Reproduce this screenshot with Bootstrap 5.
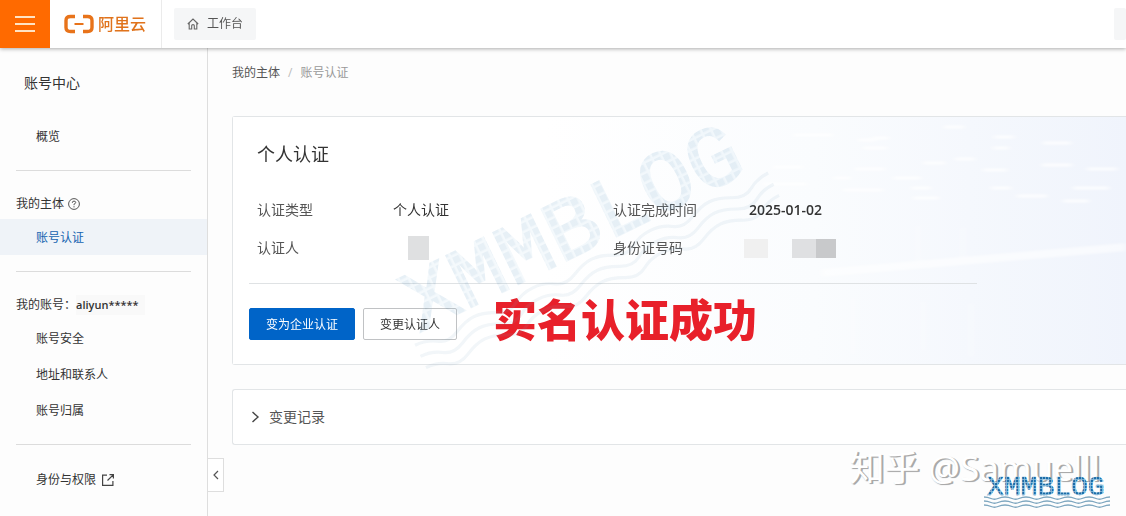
<!DOCTYPE html>
<html lang="zh-CN">
<head>
<meta charset="utf-8">
<meta name="viewport" content="width=device-width, initial-scale=1">
<title>账号认证</title>
<link rel="stylesheet" href="https://cdn.jsdelivr.net/npm/bootstrap@5.3.0/dist/css/bootstrap.min.css">
<style>
  body { font-family: "Open Sans", "Noto Sans CJK SC", sans-serif; font-size: 12px; line-height: 20px; color: #333; background: #fdfdfd; overflow-x: hidden; }
  a { color: inherit; text-decoration: none; }
  .topbar { height: 48px; background: #fff; box-shadow: 0 1px 4px rgba(0,0,0,.32); z-index: 5; }
  .menu-btn { width: 50px; background: #ff6a00; border: 0; }
  .brand { width: 112px; padding-left: 14px; gap: 4px; color: #e0731c; font-size: 16px; font-weight: 500; border-right: 1px solid #ebebeb; }
  .top-chip { height: 32px; background: #f5f6f7; color: #555; border-radius: 2px; }
  .top-link { padding: 0 13px; gap: 8px; margin-left: 12px; }
  .top-more { width: 12px; border: 0; }
  .side { width: 208px; padding-top: 18px; border-right: 1px solid #dedede; }
  .side-title { height: 34px; padding-left: 24px; margin-bottom: 18px; font-size: 14px; }
  .side-group { height: 32px; padding: 2px 0 0 16px; gap: 4px; }
  .side-item { height: 36px; padding: 2px 0 0 36px; gap: 6px; }
  .side-item.current { background: #eff3f8; color: #1563b0; }
  .rule { height: 1px; background: #dcdcdc; margin: 16px; }
  .account { background: #f9f9f9; padding-right: 6px; font-size: 11px; font-weight: 600; }
  .collapse-btn { left: 100%; bottom: 24px; width: 17px; height: 34px; background: #fff; border: 1px solid #dedede; }
  .main { padding: 15px 0 0 24px; min-width: 0; }
  .crumbs { margin-bottom: 33px; color: #555; }
  .crumbs .sep { color: #bbb; padding: 0 8px; }
  .crumbs .here { color: #999; }
  .panel { border: 1px solid #e2e5e7; border-right: 0; border-radius: 3px 0 0 3px; background: #fff; }
  .verify { padding: 23px 16px 24px; margin-bottom: 24px; }
  .verify h1 { font-size: 18px; line-height: 28px; font-weight: 400; margin: 0 0 23px 8px; }
  .facts { display: grid; grid-template-columns: 136px 220px 136px 1fr; grid-auto-rows: 38px; align-items: center; max-width: 728px; padding-left: 8px; margin: 0; font-size: 14px; }
  .facts dt { font-weight: 400; color: #555; }
  .facts dd { margin: 0; }
  .facts .when { font-weight: 600; }
  .facts-rule { max-width: 728px; height: 1px; background: #dfe2e4; margin: 16px 0 24px; }
  .hidden-name { width: 21px; height: 24px; margin-left: 15px; background: #dfe0e1; }
  .hidden-id { height: 19px; margin-left: -5px; }
  .hidden-id i { width: 24px; }
  .act { height: 32px; padding: 1px 16px 0; font-size: 12px; line-height: 20px; border-radius: 2px; }
  .act-main { background: #0064c8; border-color: #0064c8; color: #fff; }
  .act-plain { background: #fff; border-color: #c0c2c4; color: #333; }
  .shout { margin-left: 36px; padding-bottom: 8px; font-size: 44px; line-height: 24px; font-weight: 900; color: #e8202a; }
  .log-btn { width: 100%; height: 54px; padding: 0 18px; gap: 9px; border: 0; background: none; font-size: 14px; color: #555; }
  .scenery { inset: 0; width: 100%; height: 100%; }
  .big-mark { left: 384px; top: 190px; width: 396px; transform: rotate(-26deg); opacity: .1; pointer-events: none; z-index: 2; overflow: visible; }
  .corner-mark { right: 16px; bottom: 8px; width: 127px; overflow: visible; }
  .credit { right: 26px; bottom: 29px; font-family: "Noto Sans", "Noto Sans CJK SC", sans-serif; font-size: 35px; line-height: 38px; color: #fff; text-shadow: 2px 1px 0 #aaa, 1px 1px 1px #aaa; white-space: nowrap; }
  .pix { font: 400 28px "Liberation Mono", monospace; stroke-width: .6; }
</style>
</head>
<body>
<div class="d-flex flex-column min-vh-100 position-relative">
  <header class="topbar d-flex align-items-center position-relative">
    <button class="menu-btn h-100 d-flex align-items-center justify-content-center p-0" type="button" aria-label="菜单">
      <svg width="20" height="18" viewBox="0 0 20 18" stroke="#ffe3c4" stroke-width="2"><path d="M0 2h20M0 9h20M0 16h20"/></svg>
    </button>
    <a class="brand h-100 d-flex align-items-center flex-shrink-0 text-nowrap" href="#">
      <svg width="30" height="20" viewBox="0 0 30 20" fill="none" stroke="#e8731a" class="flex-shrink-0"><path d="M11 2.500H6.500Q2 2.500 2 6.500v7Q2 17.500 6.500 17.500H11M19 2.500h4.500q4.500 0 4.500 4v7q0 4-4.500 4H19" stroke-width="3.400"/><path d="M10.500 10h9" stroke-width="2"/></svg>
      <span>阿里云</span>
    </a>
    <a class="top-chip top-link d-flex align-items-center" href="#">
      <svg width="12" height="12" viewBox="0 0 12 12" fill="none" stroke="#666" stroke-width="1.100"><path d="M.8 6 6 1l5.200 5M2.200 5v6h2.500V7.600q0-1 1.300-1t1.300 1V11h2.500V5"/></svg>
      <span>工作台</span>
    </a>
    <button class="top-chip top-more ms-auto p-0" type="button" aria-label="更多"></button>
  </header>

  <div class="d-flex flex-grow-1">
    <nav class="side flex-shrink-0 position-relative">
      <div class="side-title d-flex align-items-center">账号中心</div>
      <a class="side-item d-flex align-items-center" href="#">概览</a>
      <div class="rule"></div>
      <div class="side-group d-flex align-items-center">我的主体
        <svg width="12" height="12" viewBox="0 0 12 12" fill="none" stroke="#555"><circle cx="6" cy="6" r="5.400"/><path d="M4.300 4.800q0-1.700 1.700-1.700t1.700 1.500Q7.700 5.500 6 6.200v1M6 8.200v1.200"/></svg>
      </div>
      <a class="side-item current d-flex align-items-center" href="#" aria-current="page">账号认证</a>
      <div class="rule"></div>
      <div class="side-group d-flex align-items-center gap-0"><span>我的账号：</span><span class="account">aliyun*****</span></div>
      <a class="side-item d-flex align-items-center" href="#">账号安全</a>
      <a class="side-item d-flex align-items-center" href="#">地址和联系人</a>
      <a class="side-item d-flex align-items-center" href="#">账号归属</a>
      <div class="rule"></div>
      <a class="side-item d-flex align-items-center" href="#">身份与权限
        <svg width="12" height="12" viewBox="0 0 12 12" fill="none" stroke="#444" stroke-width="1.200"><path d="M5 1.100H.600v10.300h10.300V7M5.500 6.500l5.700-5.700M7.500.700h3.900v3.900"/></svg>
      </a>
      <button class="collapse-btn position-absolute d-flex align-items-center justify-content-center p-0" type="button" aria-label="收起">
        <svg width="6" height="10" viewBox="0 0 6 10" fill="none" stroke="#555" stroke-width="1.200"><path d="M5 1 1 5l4 4"/></svg>
      </button>
    </nav>

    <main class="main flex-grow-1">
      <nav class="crumbs" aria-label="路径"><a href="#">我的主体</a><span class="sep">/</span><span class="here">账号认证</span></nav>

      <section class="panel verify position-relative">
        <svg class="scenery position-absolute" viewBox="0 0 893 247" preserveAspectRatio="none" aria-hidden="true">
          <defs><linearGradient id="sea"><stop offset=".35" stop-color="#fff"/><stop offset=".65" stop-color="#fafcfe"/><stop offset="1" stop-color="#f0f4fc"/></linearGradient>
          <filter id="soft" x="-5%" y="-5%" width="110%" height="110%"><feGaussianBlur stdDeviation="3 .8"/></filter></defs>
          <rect width="893" height="247" fill="url(#sea)"/>
          <g filter="url(#soft)" fill="none" stroke="#fff" stroke-width="3" opacity=".8">
            <path d="M560 18h40m25 5h18m68-13h20M640 21h16m105-1h20M630 31h24m106 0h16M690 46h22m-90 6h30m70-10h20M750 53h24m35-5h30M660 61h28m70 10h20M600 61h18m60 10h20M810 26h28m16 26h30M840 71h36M680 81h26m78-2h30M610 73h40m180 11h26M540 50h30m-40 17h44"/>
            <path d="M588 156Q760 142 893 130" stroke-width="8" opacity=".7"/>
            <path d="M685 108v36m45-34v32M620 180v58m70-54v50m48-48v54" opacity=".6"/>
          </g>
        </svg>
        <div class="position-relative">
          <h1>个人认证</h1>
          <dl class="facts">
            <dt>认证类型</dt><dd>个人认证</dd>
            <dt>认证完成时间</dt><dd class="when">2025-01-02</dd>
            <dt>认证人</dt><dd><div class="hidden-name"></div></dd>
            <dt>身份证号码</dt><dd><div class="hidden-id d-flex"><i style="background:#f0f0f0"></i><i></i><i style="background:#dfe0e2"></i><i style="background:#c8c9cb;width:20px"></i></div></dd>
          </dl>
          <div class="facts-rule"></div>
          <div class="d-flex align-items-center">
            <button class="btn act act-main" type="button">变为企业认证</button>
            <button class="btn act act-plain ms-2" type="button">变更认证人</button>
            <strong class="shout text-nowrap">实名认证成功</strong>
          </div>
        </div>
      </section>

      <section class="panel">
        <button class="log-btn d-flex align-items-center" type="button">
          <svg width="9" height="12" viewBox="0 0 9 12" fill="none" stroke="#444" stroke-width="1.400"><path d="m1.500 1 5.500 5-5.500 5"/></svg>
          变更记录
        </button>
      </section>
    </main>
  </div>

  <svg class="big-mark position-absolute" viewBox="0 0 127 34">
    <defs><pattern id="dots" width="3" height="3" patternUnits="userSpaceOnUse"><rect width="3" height="3" fill="#8fbfdc"/><rect width="2.200" height="2.200" fill="#1b6da8"/></pattern></defs>
    <text class="pix" x="4" y="20" fill="url(#dots)" stroke="url(#dots)">XMMBLOG</text>
    <path d="M1 23q4 0 7 2t7 0 7-2 7 2 7 0 7-2 7 2 7 0 7-2 7 2 7 0 7-2 7 2 7 0 7-2 7 2 7 0 7-2M1 27q4 0 7 2t7 0 7-2 7 2 7 0 7-2 7 2 7 0 7-2 7 2 7 0 7-2 7 2 7 0 7-2 7 2 7 0 7-2M1 31q4 0 7 2t7 0 7-2 7 2 7 0 7-2 7 2 7 0 7-2 7 2 7 0 7-2 7 2 7 0 7-2 7 2 7 0 7-2" fill="none" stroke="#7da6bf"/>
  </svg>
  <div class="credit position-absolute">知乎 @Samuelll</div>
  <svg class="corner-mark position-absolute" viewBox="0 0 127 34">
    <text class="pix" x="4" y="21" fill="url(#dots)" stroke="url(#dots)">XMMBLOG</text>
    <path d="M1 23q3.500 0 7 1.500t7 0 7-1.500 7 1.500 7 0 7-1.500 7 1.500 7 0 7-1.500 7 1.500 7 0 7-1.500 7 1.500 7 0 7-1.500 7 1.500 7 0 7-1.500M1 27q3.500 0 7 1.500t7 0 7-1.500 7 1.500 7 0 7-1.500 7 1.500 7 0 7-1.500 7 1.500 7 0 7-1.500 7 1.500 7 0 7-1.500 7 1.500 7 0 7-1.500M1 31q3.500 0 7 1.500t7 0 7-1.500 7 1.500 7 0 7-1.500 7 1.500 7 0 7-1.500 7 1.500 7 0 7-1.500 7 1.500 7 0 7-1.500 7 1.500 7 0 7-1.500" fill="none" stroke="#7da6bf" stroke-width="1.300"/>
  </svg>
</div>
<script src="https://cdn.jsdelivr.net/npm/bootstrap@5.3.0/dist/js/bootstrap.bundle.min.js"></script>
</body>
</html>
